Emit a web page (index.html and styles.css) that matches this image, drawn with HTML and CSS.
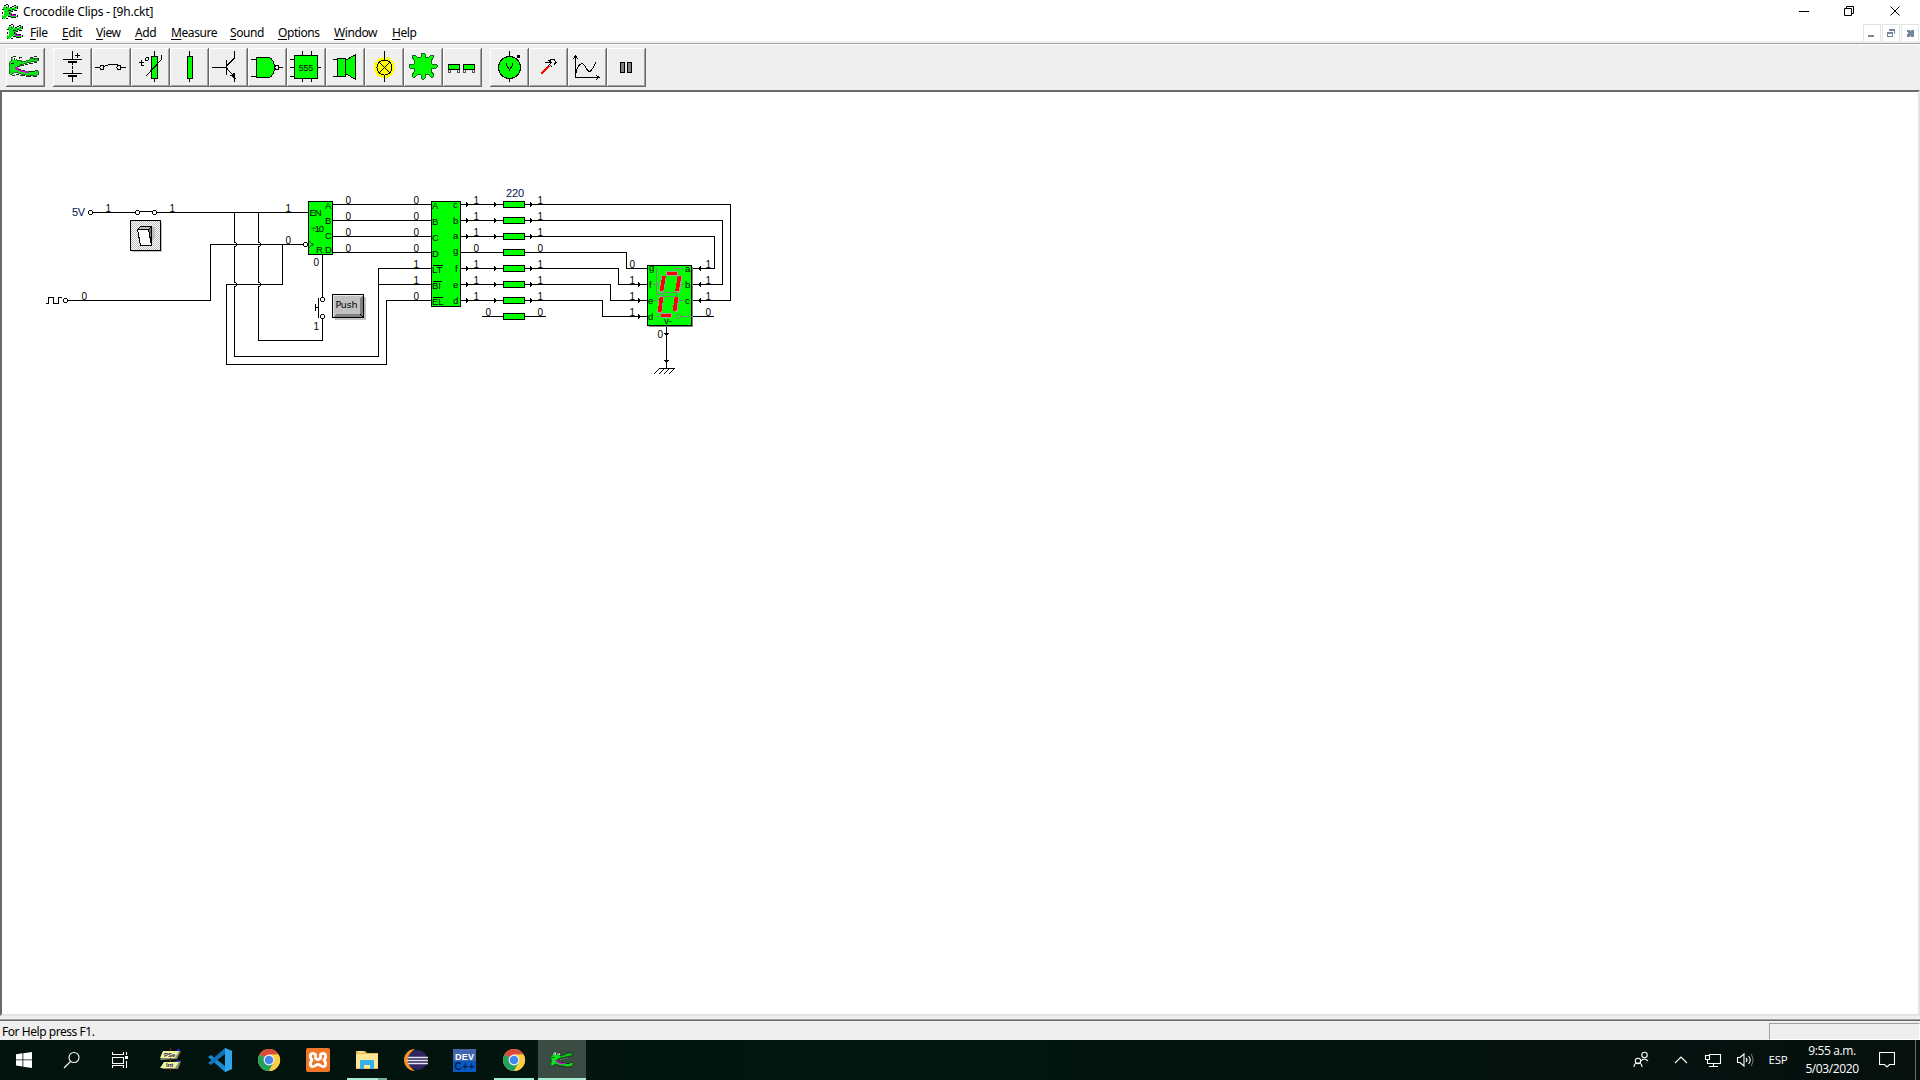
FILE: index.html
```html
<!DOCTYPE html>
<html lang="en">
<head>
<meta charset="utf-8">
<title>Crocodile Clips - [9h.ckt]</title>
<link rel="stylesheet" href="styles.css">
</head>
<body>
<svg class="defs" aria-hidden="true">
  <symbol id="croc-small" viewBox="0 0 16 16">
    <path d="M0 4L2 2L5 2L7 4L11 4L13 2L15 2V5L12 6L9 7L8 8L10 10L14 11L15 13H11L8 13L5 12L3 15H1L0 12L2 9V6Z" fill="#08e619"/>
    <path d="M7 8L9 9L14 11V12L10 12L7 10Z" fill="#d800d8"/>
    <path d="M2 1h2v1h-2zM4 0h2v1h-2zM6 1h1v2h-1zM8 3h2v1h-2zM10 2h2v1h-2zM12 1h2v1h-2zM15 2h1v3h-1zM12 6h3v1h-3zM9 7h2v1h-2zM7 8h1v2h-1zM9 10h1v1h-1zM11 10h3v1h-3zM15 11h1v2h-1zM9 13h5v1h-5zM6 12h2v1h-2zM4 14h2v1h-2zM0 14h1v1h-1zM0 5h2v1h-2zM4 3h1v1h-1zM13 3h1v1h-1zM10 5h2v1h-2zM0 8h1v2h-1zM6 6h3v1h-3zM8 12h1v1h-1z" fill="#101010"/>
    <path d="M3 2h1v1h-1zM5 2h1v1h-1zM1 10h1v2h-1z" fill="#eee"/>
  </symbol>
  <symbol id="croc" viewBox="0 0 32 24">
    <path d="M1 8L3 6L4 3L7 2L9 5L13 5L14 7L21 5L23 3L28 3L30 3L29 6L23 7L12 10L9 12L9 14L17 16L25 17L29 15L31 17L29 20L23 21L13 19L7 17L3 20L1 18L2 13Z" fill="#0be617" stroke="#0a3a10" stroke-width=".7"/>
    <path d="M7 12L9 12L14 15L22 17L20 18L13 17L7 14Z" fill="#d50bd5"/>
    <path d="M3 2h1v1h-1zM5 1h3v1h-3zM11 2h3v1h-3zM22 2h3v1h-3zM26 1h3v1h-3zM30 3h1v3h-1zM26 7h3v1h-3zM21 8h4v1h-4zM17 9h3v1h-3zM12 10h4v1h-4zM10 11h2v1h-2zM10 14h3v1h-3zM14 15h3v1h-3zM21 16h5v1h-5zM27 15h3v1h-3zM30 19h1v1h-1zM25 21h4v1h-4zM18 21h5v1h-5zM12 20h5v1h-5zM8 19h3v1h-3zM4 20h3v1h-3z" fill="#0c3c10"/>
    <path d="M5 2h3v3h-3zM10 3h3v2h-3zM14 11h1v1h-1zM18 10h1v1h-1zM22 9h1v1h-1z" fill="#fff"/>
    <path d="M6 3h1v2h-1zM11 3h1v1h-1zM26 4h1v1h-1zM3 8h3v1h-3z" fill="#111"/>
  </symbol>
  <symbol id="chrome" viewBox="0 0 24 24">
    <circle cx="12" cy="12" r="11" fill="#f9cc3e"/>
    <path d="M12 12L2.500 6.500A11 11 0 0 1 21.500 6.500L12 7Z" fill="#dc4a3c"/>
    <path d="M2.500 6.500A11 11 0 0 0 12 23L16.500 14.500L12 12Z" fill="#22a05b"/>
    <path d="M12 6.500H21.600A11 11 0 0 1 12 23L16.800 14.600Z" fill="#fbcd42"/>
    <circle cx="12" cy="12" r="5.400" fill="#f4f6f4"/><circle cx="12" cy="12" r="4.300" fill="#4486ef"/>
  </symbol>
  <symbol id="jump" viewBox="0 0 6 7"><path d="M1 0h2v1h1v1h1v3h-1v1h-1v1h-2z" fill="#fff"/><path d="M1.500 0v1.500h1l1 1v2l-1 1h-1v1.500M0 3.500h6" fill="none" stroke="#000"/></symbol>
</svg>

<header class="titlebar">
  <svg class="croc16"><use href="#croc-small"/></svg>
  <span class="title">Crocodile Clips - [9h.ckt]</span>
  <svg class="winbuttons" width="104" height="20" viewBox="1798 0 104 20"><path d="M1799 10.500h10M1844.500 7.500h7v7h-7zM1846.500 7v-1.500h7v7h-1.500M1890.500 5.500l9 9M1899.500 5.500l-9 9" fill="none" stroke="#000"/></svg>
</header>
<nav class="menubar">
  <svg class="croc16"><use href="#croc-small"/></svg>
  <ul class="menu">
    <li class="w18"><u>F</u>ile</li><li class="w20"><u>E</u>dit</li><li class="w25"><u>V</u>iew</li><li class="w22"><u>A</u>dd</li><li class="w45"><u>M</u>easure</li><li class="w34"><u>S</u>ound</li><li class="w42"><u>O</u>ptions</li><li class="w44"><u>W</u>indow</li><li class="w25"><u>H</u>elp</li>
  </ul>
  <div class="mdi">
    <svg viewBox="0 0 16 16"><path d="M4 10h6v2h-6z"/></svg>
    <svg viewBox="0 0 16 16"><path d="M4 7h6v5h-6zM5 9v2h4v-2zM6 4h6v5h-1v-3h-5z" fill-rule="evenodd"/></svg>
    <svg viewBox="0 0 16 16"><path d="M5 5h2l1 1 1-1h3v2l-1 1 1 1v3h-3l-1-1-1 1h-2v-3l1-1-1-1z"/></svg>
  </div>
</nav>

<div class="toolbar">
  <div class="group">
    <button class="tool"><svg class="plain" viewBox="0 0 39 39"><use href="#croc" x="2" y="7" width="32" height="24"/></svg></button>
  </div>
  <div class="group">
    <button class="tool"><svg viewBox="0 0 39 39"><path d="M19.500 3v8M10 11.500h19M19.500 14v11M10 25.500h19M19.500 28v6M24.500 5v5M22 7.500h5"/><path d="M15 14h9M15 28h9" stroke-width="2"/><path d="M19 17.500h1M19 21.500h1" stroke="#efefef"/></svg></button>
    <button class="tool"><svg viewBox="0 0 39 39"><path d="M3 19.500h5M29 19.500h5M12 18.500l2-1 7-1.500h5"/><circle cx="10" cy="19.500" r="2"/><circle cx="27" cy="19.500" r="2"/></svg></button>
    <button class="tool"><svg viewBox="-1 0 39 39"><path d="M22.500 3v31"/><path class="g" d="M19.500 8.500h6v22h-6z"/><path d="M13.500 28.500l16-17v-5M9.500 12v5l2 1M7 14.500h5"/><circle cx="15" cy="11" r="1.500"/></svg></button>
    <button class="tool"><svg viewBox="0 0 39 39"><path d="M19.500 3v31"/><path class="g" d="M17.500 8.500h5v22h-5z"/></svg></button>
    <button class="tool"><svg viewBox="0 0 39 39"><path d="M3 19.500h14M17.500 12v15M17.500 18l8-8v-7M17.500 20l8 9v5"/><path d="M21 27l3 0 1-2 1 5z" fill="#000"/></svg></button>
    <button class="tool"><svg viewBox="-1 0 39 39"><path d="M2 11.500h6M2 28.500h6M29 19.500h5"/><path class="g" d="M7.500 9.500h13q5 3 5 10t-5 10h-13z"/><circle cx="28" cy="19.500" r="2"/></svg></button>
    <button class="tool"><svg viewBox="-1 0 39 39"><path d="M14.500 3v5M23.500 3v5M14.500 30v4M23.500 30v4M2 11.500h5M2 19.500h5M2 28.500h5M29 19.500h4"/><path class="g" d="M6.500 7.500h23v23h-23z"/><text x="18" y="23" class="chip" textLength="15">555</text></svg></button>
    <button class="tool"><svg viewBox="-1 0 39 39"><path d="M6 11.500h5M6 28.500h5"/><path class="g" d="M10.500 10.500h8v18h-8zM18.500 12.500l10-6v25l-10-6z"/></svg></button>
    <button class="tool"><svg viewBox="-1 0 39 39"><circle cx="18.500" cy="19.500" r="10" fill="#ff0" stroke="#ff0" stroke-dasharray="1 1" stroke-width="2"/><circle cx="18.500" cy="19.500" r="7.500" fill="#ff0"/><path d="M18.500 3v9M18.500 27v7M13.500 14.500l10 10M23.500 14.500l-10 10"/></svg></button>
    <button class="tool"><svg viewBox="0 0 39 39"><path d="M17 9v-3l1-1h2l1 1v3l3 1 3-3h2l1 2-3 4 1 3h4l1 1v2l-1 1h-4l-1 3 3 4-1 2h-2l-3-3-3 1v3l-1 1h-2l-1-1v-3l-3-1-3 3h-2l-1-2 3-4-1-3h-4l-1-1v-2l1-1h4l1-3-3-4 1-2h2l3 3z" fill="#0f0" stroke="#206020"/><path d="M18 19.500h1" stroke="#808080"/></svg></button>
    <button class="tool"><svg viewBox="0 0 39 39"><path class="g" d="M5.500 16.500h11v5h-11zM20.500 16.500h11v5h-11z"/><path d="M5 22v2h2v-2M14 22v2h2v-2M20 22v2h2v-2M29 22v2h2v-2" stroke="#555"/></svg></button>
  </div>
  <div class="group">
    <button class="tool"><svg viewBox="0 0 39 39"><path d="M19.500 3v31"/><circle class="g" cx="19.500" cy="19.500" r="11"/><path d="M16.500 15v2l3 5 3-5v-2"/><path d="M27 7h3v3h-3z" fill="#000" stroke="none"/></svg></button>
    <button class="tool"><svg viewBox="0 0 39 39"><path d="M12 26l8-8" stroke="red" stroke-width="2"/><path d="M19 18l3-3M16 14.500h6l-2-2 3-1h2l2 3-2 2M21 17l2 2"/></svg></button>
    <button class="tool"><svg viewBox="0 0 39 39"><path d="M7.500 8v21h24M5 11l2.500-3 2.500 3M28 27l3 2.500-3 2M8 25c2-10 7-12 10-5 4 7 6 2 10-6"/></svg></button>
    <button class="tool"><svg viewBox="0 0 39 39"><path d="M13.500 14.500h4v10h-4zM20.500 14.500h4v10h-4z" fill="#808080"/></svg></button>
  </div>
</div>

<main class="canvas">
<svg class="circuit" viewBox="2 92 1916 922" width="1916" height="922">
  <defs>
    <pattern id="dither" width="2" height="2" patternUnits="userSpaceOnUse"><path d="M0 0h2v2H0z" fill="#fff"/><path d="M0 0h1v1H0zM1 1h1v1H1z" fill="#c0c0c0"/></pattern>
    <path id="ar" d="M0-2h1v1h1v1h1v1h-1v1h-1v1h-1z"/>
    <path id="al" d="M3-2h-1v1h-1v1h-1v1h1v1h1v1h1z"/>
    <path id="ad" d="M-2 0h5v1h-1v1h-1v1h-1v-1h-1v-1h-1z"/>
    <path id="res" d="M.5.500h21v6h-21z" fill="#0f0" stroke="#000"/>
  </defs>
  <g class="wire">
    <path d="M93 212.500h43M139 211.500h14M156 212.500h152M234.500 212v144.500h144v-88h53M378.500 284.500h53M258.500 212v128.500h64v-22M322.500 254v44"/>
    <path d="M68 300.500h142.500v-56h93M282.500 244v40.500h-56v80h160v-64h45"/>
    <path d="M333 204.500h98M333 220.500h98M333 236.500h98M333 252.500h98"/>
    <path d="M460 204.500h270.500v96h-39M460 220.500h262.500v64h-31M460 236.500h254.500v32h-23M460 252.500h166.500v16h21M460 268.500h158.500v16h29M460 284.500h150.500v16h37M460 300.500h142.500v16h45M482 316.500h64M692 316.500h22"/>
    <path d="M318.500 298v20M315.500 304v7M315 307.500h3M666.500 326v42M46 303.500h2.500v-6h5v6h5v-6h3M659 368.500h16M654 374l6-6M659 374l6-6M664 374l6-6M669 374l6-6"/>
  </g>
  <g><use href="#jump" x="233" y="241" width="6" height="7"/><use href="#jump" x="257" y="241" width="6" height="7"/><use href="#jump" x="233" y="281" width="6" height="7"/><use href="#jump" x="257" y="281" width="6" height="7"/></g>
  <g class="node"><circle cx="90.500" cy="212.500" r="2"/><circle cx="137.500" cy="212.500" r="2"/><circle cx="154.500" cy="212.500" r="2"/><circle cx="65.500" cy="300.500" r="2"/><circle cx="305.500" cy="244.500" r="2"/><circle cx="322.500" cy="299.500" r="2"/><circle cx="322.500" cy="316.500" r="2"/></g>
  <g>
    <path d="M132 222h30v30h-30z" fill="#c0c0c0"/><path d="M130.500 220.500h30v30h-30z" fill="url(#dither)" stroke="#000"/>
    <path d="M152 227h3v10l-3 4z" fill="#c0c0c0"/><path d="M137.500 229.500l3-3h11v19" fill="#c0c0c0" stroke="#000"/><path d="M148.500 229.500l3-3v19z" fill="#707070" stroke="#000"/><path d="M137.500 229.500h11l3 16h-11z" fill="#fff" stroke="#000"/>
  </g>
  <g>
    <path d="M335 297h31v23h-31z" fill="#c0c0c0"/><path d="M332.500 294.500h31v23h-31z" fill="#c0c0c0" stroke="#000"/><path d="M333 317l3-3h24v-16l3-3v22z" fill="#808080"/><path d="M333.500 317v-21.500h29" fill="none" stroke="#e8e8e8"/><path d="M360 314l3 3" stroke="#000"/>
    <text x="335.500" y="308" class="push" textLength="22">Push</text>
  </g>
  <g class="part"><path d="M308.500 201.500h24v53h-24zM431.500 201.500h29v105h-29z"/><path d="M309 241l4 3.500-4 3.500" class="thin"/></g>
  <g><use href="#res" x="503" y="201"/><use href="#res" x="503" y="217"/><use href="#res" x="503" y="233"/><use href="#res" x="503" y="249"/><use href="#res" x="503" y="265"/><use href="#res" x="503" y="281"/><use href="#res" x="503" y="297"/><use href="#res" x="503" y="313"/></g>
  <g>
    <use href="#ar" x="466" y="204"/><use href="#ar" x="466" y="220"/><use href="#ar" x="466" y="236"/><use href="#ar" x="466" y="268"/><use href="#ar" x="466" y="284"/><use href="#ar" x="466" y="300"/>
    <use href="#ar" x="494" y="204"/><use href="#ar" x="494" y="220"/><use href="#ar" x="494" y="236"/><use href="#ar" x="494" y="268"/><use href="#ar" x="494" y="284"/><use href="#ar" x="494" y="300"/>
    <use href="#ar" x="530" y="204"/><use href="#ar" x="530" y="220"/><use href="#ar" x="530" y="236"/><use href="#ar" x="530" y="268"/><use href="#ar" x="530" y="284"/><use href="#ar" x="530" y="300"/>
    <use href="#ar" x="638" y="284"/><use href="#ar" x="638" y="300"/><use href="#ar" x="638" y="316"/>
    <use href="#al" x="698" y="268"/><use href="#al" x="698" y="284"/><use href="#al" x="698" y="300"/>
    <use href="#ad" x="666" y="333"/><use href="#ad" x="666" y="360"/>
  </g>
  <g class="pins">
    <text x="309.500" y="216" textLength="12">EN</text><text x="311" y="232" textLength="13">÷10</text><text x="316" y="253">R</text><text x="325" y="253">D</text><text x="325" y="209">A</text><text x="325" y="224">B</text><text x="325" y="239">C</text>
    <text x="432" y="209">A</text><text x="432" y="225">B</text><text x="432" y="241">C</text><text x="432" y="257">D</text><text x="432" y="273">LT</text><text x="432" y="289">BI</text><text x="432" y="305">EL</text>
    <text x="453" y="208">c</text><text x="453" y="224">b</text><text x="453" y="239">a</text><text x="453" y="254">g</text><text x="455" y="272">f</text><text x="453" y="288">e</text><text x="453" y="304">d</text>
    <path d="M433 265.500h10M433 281.500h9M433 297.500h10" stroke="#000"/>
  </g>
  <g>
    <path d="M649 267h44v60h-44z" fill="#808080"/><path d="M647.500 265.500h44v60h-44z" fill="#0f0" stroke="#000"/>
    <path d="M655 268.500h1.500v26h6M673 268.500h11M653 284.500h7M680 284.500h4M653 300.500h6M678 300.500h6M655 316.500h5M680 316.500h12" fill="none" stroke="#808080"/>
    <circle cx="678.500" cy="316.500" r="2" fill="none" stroke="#808080"/>
    <path d="M666 273.500h12M664 275.500l-2.500 17M680 275.500l-2.500 17M661.500 296.500l-2 17M677 296.500l-2 15M661 315.500h11" class="segback"/>
    <path d="M664 292.500h12l1.500 2-1.500 2h-12l-1.500-2z" fill="#0f0" stroke="#808080"/>
    <path d="M667 273.500h10M661 315.500h10" class="segment"/>
    <path d="M664 276l-2.500 15M679.500 276l-2.500 15M661.500 297l-2 15M676.500 297l-2 14" class="segment thick"/>
    <g class="pins"><text x="649" y="271">g</text><text x="649" y="288">f</text><text x="648" y="304">e</text><text x="648" y="320">d</text><text x="685" y="272">a</text><text x="685" y="288">b</text><text x="685" y="304">c</text><text x="664" y="324" textLength="8">v-</text></g>
  </g>
  <g class="labels" transform="translate(.4 .6)">
    <text x="105" y="211">1</text><text x="169" y="211">1</text><text x="285" y="211">1</text><text x="285" y="243">0</text><text x="81" y="299">0</text><text x="313" y="265">0</text><text x="313" y="329">1</text>
    <text x="345" y="203">0</text><text x="345" y="219">0</text><text x="345" y="235">0</text><text x="345" y="251">0</text>
    <text x="413" y="203">0</text><text x="413" y="219">0</text><text x="413" y="235">0</text><text x="413" y="251">0</text><text x="413" y="267">1</text><text x="413" y="283">1</text><text x="413" y="299">0</text>
    <text x="473" y="203">1</text><text x="473" y="219">1</text><text x="473" y="235">1</text><text x="473" y="251">0</text><text x="473" y="267">1</text><text x="473" y="283">1</text><text x="473" y="299">1</text><text x="485" y="315">0</text>
    <text x="537" y="203">1</text><text x="537" y="219">1</text><text x="537" y="235">1</text><text x="537" y="251">0</text><text x="537" y="267">1</text><text x="537" y="283">1</text><text x="537" y="299">1</text><text x="537" y="315">0</text>
    <text x="629" y="267">0</text><text x="629" y="283">1</text><text x="629" y="299">1</text><text x="629" y="315">1</text><text x="705" y="267">1</text><text x="705" y="283">1</text><text x="705" y="299">1</text><text x="705" y="315">0</text><text x="657" y="337">0</text>
  </g>
  <g class="values"><text x="72" y="216" textLength="13">5V</text><text x="506" y="197" textLength="18">220</text></g>
</svg>
</main>
<div class="statusbar"><span>For Help press F1.</span><div class="pane"></div></div>

<footer class="taskbar">
  <div class="task sys"><svg width="16" height="16" viewBox="0 0 16 16" fill="#fff"><path d="M0 2.300L6.500 1.300V7.500H0zM7.300 1.200L16 0V7.500H7.300zM0 8.300H6.500V14.500L0 13.600zM7.300 8.300H16V16L7.300 14.800z"/></svg></div>
  <div class="task sys"><svg width="18" height="18" viewBox="0 0 18 18" class="line"><circle cx="11" cy="6.500" r="5"/><path d="M7.500 10.500L1 17"/></svg></div>
  <div class="task sys"><svg width="17" height="16" viewBox="0 0 17 16" class="line"><path d="M.5 0v2.500h11v-2.500M.5 5.500h11v6h-11zM.5 16v-2.500h11v2.500M14.500 0v3M14.500 9v7"/><path d="M13 4h3v3h-3z" fill="#fff" stroke="none"/></svg></div>
  <div class="task first"><svg width="24" height="24" viewBox="0 0 24 24"><path d="M5 4l17-1-4 8-17 1z" fill="#888b70"/><path d="M4 3l16 0-4 7H1z" fill="#f0f5a0"/><path d="M6 15l16-2-3 8-16 0z" fill="#888b70"/><path d="M5 14l15 0-4 6H1z" fill="#f0f5a0"/><path d="M11.500 0v3M11.500 10v4M11.500 20v3" stroke="#891c20"/><path d="M18 2h3M18 13h2" stroke="#2020e0" stroke-width="2"/><text x="5" y="9" class="pse">PSe</text><text x="7" y="19" class="pse">Int</text></svg></div>
  <div class="task"><svg width="24" height="24" viewBox="0 0 24 24"><path d="M17 0l7 3v18l-7 3L0 9l3-2 14 11z" fill="#168bd2"/><path d="M17 0L0 15l3 2L17 6z" fill="#1173b5"/><path d="M17 0l7 3v18l-7 3z" fill="#31a5ec"/></svg></div>
  <div class="task"><svg width="24" height="24"><use href="#chrome"/></svg></div>
  <div class="task"><svg width="24" height="24" viewBox="0 0 24 24"><rect width="24" height="24" rx="2" fill="#ee7626"/><path d="M9.500 6.500C5 3 2.500 8 6 12C2.500 16 5 21 9.500 17.500Q12 15.500 14.500 17.500C19 21 21.500 16 18 12C21.500 8 19 3 14.500 6.500V10Q12 13 9.500 10Z" fill="none" stroke="#fff" stroke-width="2.800"/></svg></div>
  <div class="task open stacked"><svg width="22" height="20" viewBox="0 0 22 20"><path d="M0 1h9l2 2h11v16H0z" fill="#e9bd49"/><path d="M1 4h21v14H0V5z" fill="#ffe797"/><path d="M4 19v-9h14v9h-4v-4H8v4z" fill="#35b1eb"/><path d="M2 2h5" stroke="#fff"/></svg></div>
  <div class="task"><svg width="24" height="22" viewBox="0 0 24 22"><path d="M11 0A11 11 0 0 0 11 22A13 13 0 0 1 11 0" fill="#f49325"/><circle cx="13.500" cy="11" r="10" fill="#31255f"/><path d="M4 8.500h20M3 11.500h21M4 14.500h20" stroke="#e8e5f0" stroke-width="1.500"/></svg></div>
  <div class="task"><svg width="23" height="23" viewBox="0 0 23 23"><path d="M0 0h23v12H0z" fill="#4266ae"/><path d="M0 12h23v11H0z" fill="#075bc0"/><text x="2" y="10.500" class="dev" textLength="19">DEV</text><text x="1.500" y="21" class="cpp" textLength="20">C++</text></svg></div>
  <div class="task open"><svg width="24" height="24"><use href="#chrome"/></svg></div>
  <div class="task active"><svg width="24" height="18"><use href="#croc"/></svg></div>
  <svg class="tray" width="143" height="40" viewBox="1630 1040 143 40"><g class="line"><circle cx="1644.500" cy="1055" r="2.700"/><path d="M1641 1061q3-4 7 0"/><circle cx="1638" cy="1061" r="2.700"/><path d="M1634 1067q0-4 4-4t4 4M1675 1063l6-6 6 6M1709 1054.500h11.500v9h-13v-4M1705.500 1055.500h4v4h-4zM1713.500 1064v2M1709 1066.500h9M1737.500 1057.500h2.500l4-3.500v12l-4-3.500h-2.500zM1746 1058q2 2 0 4M1748.500 1056q3.500 4 0 8"/><path d="M1751 1054q4 6 0 12" opacity=".4"/></g></svg>
  <span class="lang">ESP</span>
  <div class="clock"><span>9:55 a.m.</span><span>5/03/2020</span></div>
  <svg class="notice line" width="16" height="16" viewBox="0 0 16 16"><path d="M.5.500h15v12h-5l-2.500 2.500-2.500-2.500h-5z"/></svg>
  <div class="desktop"></div>
</footer>
</body>
</html>
```
FILE: styles.css
```css
* { box-sizing: border-box; }
body { margin: 0; width: 1920px; height: 1080px; overflow: hidden; display: flex; flex-direction: column; background: #efefef; font: 12px "Open Sans", "Noto Sans", sans-serif; color: #000; }
.defs { display: none; }
.titlebar { height: 23px; flex: none; display: flex; align-items: center; background: #fff; padding-left: 2px; }
.croc16 { width: 16px; height: 16px; flex: none; shape-rendering: crispEdges; }
.title { margin-left: 5px; font: 12px "Noto Sans", "Open Sans", sans-serif; letter-spacing: -.18px; white-space: nowrap; }
.titlebar .winbuttons { margin: 0 18px 2px auto; }
.menubar { height: 18px; flex: none; display: flex; align-items: center; background: #fff; padding-left: 7px; }
.menu { list-style: none; display: flex; gap: 14px; margin: 2px 0 0 7px; padding: 0; font: 12px/18px "Noto Sans", "Open Sans", sans-serif; letter-spacing: -.42px; white-space: nowrap; }
.menu u { text-underline-offset: 2px; text-decoration-thickness: 1px; }
.w18 { width: 18px; } .w20 { width: 20px; } .w22 { width: 22px; } .w25 { width: 25px; } .w34 { width: 34px; } .w42 { width: 42px; } .w44 { width: 44px; } .w45 { width: 45px; }
.mdi { margin: 1px 1px 0 auto; display: flex; gap: 1px; }
.mdi svg { width: 18px; height: 18px; border: 1px solid #e3e3e3; fill: #75869a; shape-rendering: crispEdges; }
.toolbar { height: 49px; flex: none; display: flex; gap: 8px; padding: 4px 0 0 6px; border-top: 2px solid #efefef; background: linear-gradient(#a0a0a0 1px, #fff 1px, #fff 2px, #efefef 2px); }
.group { display: flex; height: 39px; margin-top: 1px; }
.tool { width: 39px; height: 39px; padding: 0; background: #efefef; border: 0; box-shadow: inset -1px -1px #696969, inset 1px 1px #fff, inset -2px -2px #a0a0a0; }
.tool svg { display: block; width: 39px; height: 39px; fill: none; stroke: #000; shape-rendering: crispEdges; }
.tool .plain { stroke: none; }
.tool .g { fill: #0f0; }
.tool .chip { font: 9px "Liberation Mono", monospace; fill: #000; stroke: none; text-anchor: middle; }
.canvas { height: 926px; flex: none; border: 2px solid; border-color: #696969 #e3e3e3 #e3e3e3 #696969; background: #fff; }
.circuit { display: block; shape-rendering: crispEdges; }
.wire path { fill: none; stroke: #000; }
.node circle { fill: #fff; stroke: #000; }
.part path { fill: #0f0; stroke: #000; }
.part .thin { fill: none; stroke: #063; }
.labels { font: 10px "Liberation Sans", sans-serif; }
.pins { font: 9.5px "Liberation Sans", sans-serif; }
.values { font: 11px "Liberation Sans", sans-serif; fill: #001050; }
.push { font: 9.5px "DejaVu Sans", sans-serif; }
.segback { fill: none; stroke: #a0a0a0; stroke-width: 5; }
.segment { fill: none; stroke: #f00; stroke-width: 3; }
.thick { stroke-width: 3.6; }
.statusbar { flex: 1; display: flex; align-items: flex-end; justify-content: space-between; padding-left: 2px; background: linear-gradient(transparent 3px, #a0a0a0 3px, #a0a0a0 4px, #696969 4px, #696969 5px, transparent 5px); font: 12px/16px "Noto Sans", "Open Sans", sans-serif; letter-spacing: -.45px; }
.pane { width: 151px; height: 17px; border: 1px solid; border-color: #a0a0a0 #fff #fff #a0a0a0; }
.taskbar { height: 40px; flex: none; display: flex; align-items: stretch; background: linear-gradient(90deg, #03130e, #02150f 50%, #06100e); color: #fff; }
.task { width: 49px; display: flex; align-items: center; justify-content: center; border-bottom: 2px solid transparent; padding-top: 2px; }
.sys { width: 48px; }
.first { margin-left: 2px; }
.line { fill: none; stroke: #fff; stroke-width: 1.1; }
.open { background: linear-gradient(#a5efd0, #a5efd0) center 38px / 40px 2px no-repeat; background-origin: border-box; background-clip: border-box; }
.stacked { background-image: linear-gradient(90deg, #a5efd0 31px, #78ae98 31px); }
.active { width: 48px; background: #3a4c44; border-color: #a5efd0; }
.pse { font: bold 6px "Liberation Sans", sans-serif; fill: #26265a; }
.dev { font: bold 9px "Liberation Sans", sans-serif; fill: #fff; }
.cpp { font: bold 10px "Liberation Sans", sans-serif; fill: #041c4c; }
.tray { margin-left: auto; }
.lang { width: 38px; text-align: center; line-height: 39px; font-size: 11.5px; letter-spacing: -.2px; margin-left: -14px; }
.clock { width: 70px; display: flex; flex-direction: column; align-items: center; justify-content: center; line-height: 18px; font-size: 12px; letter-spacing: -.4px; }
.notice { margin: 12px 0 0 12px; }
.desktop { margin-left: 20px; width: 5px; border-left: 1px solid #68716d; }
```
